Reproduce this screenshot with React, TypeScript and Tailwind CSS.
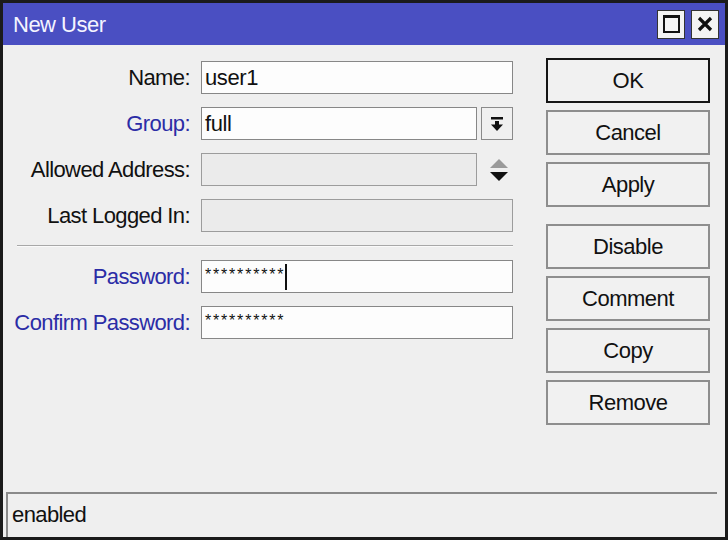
import React from 'react';

type Row = {
    label: string;
    value?: string;
    blue?: boolean;
    disabled?: boolean;
    extra?: 'dropdown' | 'updown';
    cursor?: boolean;
};

const topRows: Row[] = [
    { label: 'Name:', value: 'user1' },
    { label: 'Group:', value: 'full', blue: true, extra: 'dropdown' },
    { label: 'Allowed Address:', disabled: true, extra: 'updown' },
    { label: 'Last Logged In:', disabled: true },
];

const passRows: Row[] = [
    { label: 'Password:', value: '**********', blue: true, cursor: true },
    { label: 'Confirm Password:', value: '**********', blue: true },
];

const DropdownIcon = () => (
    <svg width="14" height="16" viewBox="0 0 14 16">
        <rect x="1" y="1" width="12" height="2.5" fill="#111" />
        <rect x="5" y="5" width="4" height="4" fill="#111" />
        <polygon points="1,8.5 13,8.5 7,15" fill="#111" />
    </svg>
);

const UpDownIcon = () => (
    <svg width="20" height="26" viewBox="0 0 20 26">
        <polygon points="10,2 19,11 1,11" fill="#9a9a9a" />
        <polygon points="1,15 19,15 10,24" fill="#111" />
    </svg>
);

const FieldRow: React.FC<{ row: Row }> = ({ row }) => (
    <>
        <div
            className={`h-[33px] flex items-center justify-end pr-[7px] text-[22px] tracking-[-0.6px] ${row.blue ? 'text-[#2b2ca6]' : 'text-[#111]'}`}
        >
            {row.label}
        </div>
        <div
            className={`h-[33px] border flex items-center pl-[3px] text-[22px] tracking-[-0.4px] text-[#111] ${
                row.extra ? '' : 'col-span-2'
            } ${row.disabled ? 'bg-[#ebebeb] border-[#9c9c9c]' : 'bg-[#fdfdfd] border-[#878787]'}`}
        >
            <span className={row.value?.startsWith('*') ? 'self-start pt-[2px] text-[16px] tracking-[1.8px]' : ''}>{row.value}</span>
            {row.cursor && <span className="w-[2px] h-[26px] bg-[#111] self-center" />}
        </div>
        {row.extra === 'dropdown' && (
            <div className="h-[33px] border border-[#8a8a8a] bg-[#f0f0f0] flex items-center justify-center">
                <DropdownIcon />
            </div>
        )}
        {row.extra === 'updown' && (
            <div className="h-[33px] flex items-center justify-center pl-[4px]">
                <UpDownIcon />
            </div>
        )}
    </>
);

const Btn: React.FC<{ label: string; primary?: boolean }> = ({ label, primary }) => (
    <button
        className={`h-[45px] w-full bg-[#f1f1f1] text-[22px] tracking-[-0.5px] text-[#111] flex items-center justify-center ${
            primary ? 'border-2 border-[#151515]' : 'border-2 border-[#8e8e8e]'
        }`}
    >
        {label}
    </button>
);

const App: React.FC = () => {
    return (
        <div className="w-[728px] h-[540px] bg-[#1b1b1b] p-[3px] flex flex-col font-['Liberation_Sans',Arial,sans-serif] overflow-hidden">
            {/* Title bar */}
            <div className="h-[42px] bg-[#4a4fc2] flex items-center justify-between pl-[10px] pr-[6px]">
                <span className="text-[22px] tracking-[-0.5px] text-[#f4f4ff]">New User</span>
                <div className="flex gap-[6px]">
                    <div className="w-[28px] h-[29px] bg-[#f3f3f3] border border-[#333] flex items-center justify-center">
                        <div className="w-[17px] h-[18px] border-2 border-[#111] border-t-[3px]" />
                    </div>
                    <div className="w-[28px] h-[29px] bg-[#f3f3f3] border border-[#333] flex items-center justify-center">
                        <svg width="16" height="16" viewBox="0 0 16 16">
                            <path d="M2 2 L14 14 M14 2 L2 14" stroke="#111" strokeWidth="3.2" />
                        </svg>
                    </div>
                </div>
            </div>

            {/* Body */}
            <div className="flex-1 bg-[#efefef] flex flex-col">
                <div className="flex-1 flex pt-[13px]">
                    <div className="w-[510px] grid grid-cols-[194px_276px_32px] gap-x-[4px] gap-y-[13px] content-start pt-[3px]">
                        {topRows.map((r) => (
                            <FieldRow key={r.label} row={r} />
                        ))}
                        <div className="col-span-3 ml-[14px] h-[2px] border-t border-[#a8a8a8] border-b border-b-[#fafafa]" />
                        {passRows.map((r) => (
                            <FieldRow key={r.label} row={r} />
                        ))}
                    </div>
                    <div className="ml-[33px] w-[164px] flex flex-col gap-[7px]">
                        <Btn label="OK" primary />
                        <Btn label="Cancel" />
                        <Btn label="Apply" />
                        <div className="h-[3px]" />
                        <Btn label="Disable" />
                        <Btn label="Comment" />
                        <Btn label="Copy" />
                        <Btn label="Remove" />
                    </div>
                </div>

                {/* Status bar */}
                <div className="h-[45px] ml-[3px] mr-[8px] border-t-2 border-l-2 border-[#8a8a8a] flex items-start pt-[4px] pl-[4px]">
                    <span className="text-[22px] tracking-[-0.6px] text-[#111]">enabled</span>
                </div>
            </div>
        </div>
    );
};

export default App;
